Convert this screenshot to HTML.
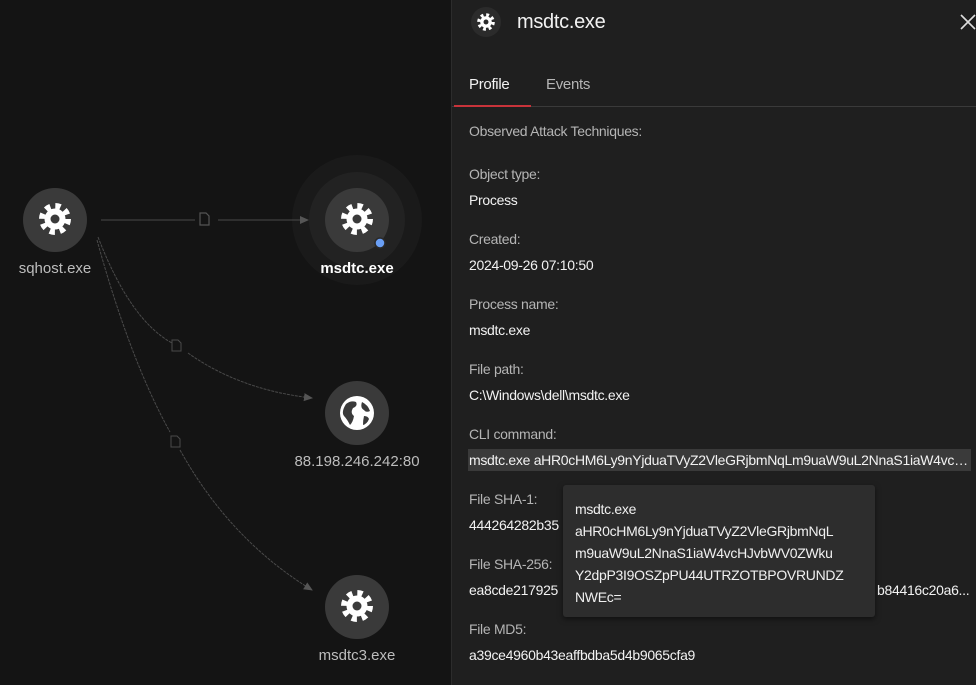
<!DOCTYPE html>
<html><head><meta charset="utf-8"><style>
*{margin:0;padding:0;box-sizing:border-box}
body{width:976px;height:685px;background:#141414;overflow:hidden;position:relative;font-family:"Liberation Sans",sans-serif}
#panel{position:absolute;left:451px;top:0;width:525px;height:685px;background:#1f1f1f;border-left:1px solid #2c2c2c}
.t{position:absolute;left:17px;font-size:14px;white-space:nowrap;letter-spacing:-0.3px}
.l{color:#b5b5b5}
.v{color:#f2f2f2}
#tip{position:absolute;left:563px;top:485px;width:312px;height:132px;background:#2d2d2d;border-radius:3px;box-shadow:0 2px 6px rgba(0,0,0,.5);color:#f0f0f0;font-size:14px;letter-spacing:-0.3px;padding:13px 0 0 12px;line-height:22px}
</style></head><body>
<svg width="451" height="685" style="position:absolute;left:0;top:0">
<defs>
<g id="gear"><circle r="13" fill="none" stroke="#fff" stroke-width="6" stroke-dasharray="5.2 5"/><circle r="10.5" fill="#fff"/><circle r="4.5" fill="#3a3a3a"/></g>
<marker id="ar" markerWidth="10" markerHeight="10" refX="8" refY="4" orient="auto" markerUnits="userSpaceOnUse"><path d="M0,0 L9,4 L0,8z" fill="#555"/></marker>
</defs>
<circle cx="357" cy="220" r="65" fill="#1a1a1a"/>
<circle cx="357" cy="220" r="48" fill="#222"/>
<line x1="101" y1="220" x2="195" y2="220" stroke="#4a4a4a"/>
<line x1="218" y1="220" x2="308" y2="220" stroke="#4a4a4a" marker-end="url(#ar)"/>
<path d="M200,213 h6 l3,3 v9 h-9z" fill="none" stroke="#555" stroke-width="1.2"/>
<path d="M98,237 Q130,320 172,343 M188,353 Q240,390 312,398" fill="none" stroke="#4a4a4a" stroke-dasharray="3 1" marker-end="url(#ar)"/>
<path d="M172,340 h6 l3,3 v8 h-9z" fill="none" stroke="#4a4a4a"/>
<path d="M97,240 Q130,360 170,432 M180,450 Q230,540 312,590" fill="none" stroke="#4a4a4a" stroke-dasharray="3 1" marker-end="url(#ar)"/>
<path d="M171,436 h6 l3,3 v8 h-9z" fill="none" stroke="#4a4a4a"/>
<circle cx="55" cy="220" r="32" fill="#3a3a3a"/>
<use href="#gear" x="55" y="219"/>
<circle cx="357" cy="220" r="32" fill="#3a3a3a"/>
<use href="#gear" x="357" y="219"/>
<circle cx="380" cy="243" r="5" fill="#6a9ff5" stroke="#2a2a2a" stroke-width="1.5"/>
<circle cx="357" cy="413" r="32" fill="#3a3a3a"/>
<circle cx="357" cy="413" r="17" fill="#fff"/>
<path d="M346,404 q5,-4 10,-2 q2,4 -3,6 q-3,5 1,8 q-1,6 -4,9 q-3,-6 -6,-9 q-3,-4 2,-12z M362,402 q6,3 8,9 q-4,2 -6,-1 q-4,-2 -2,-8z M364,416 q4,0 5,3 q-2,5 -6,6 q0,-5 1,-9z" fill="#3a3a3a"/>
<circle cx="357" cy="607" r="32" fill="#3a3a3a"/>
<use href="#gear" x="357" y="606"/>
<g font-family="Liberation Sans,sans-serif" font-size="15" text-anchor="middle">
<text x="55" y="273" fill="#bdbdbd">sqhost.exe</text>
<text x="357" y="273" fill="#fff" font-weight="bold">msdtc.exe</text>
<text x="357" y="466" fill="#bdbdbd">88.198.246.242:80</text>
<text x="357" y="660" fill="#bdbdbd">msdtc3.exe</text>
</g>
</svg>
<div id="panel">
<svg width="32" height="32" style="position:absolute;left:18px;top:6px"><circle cx="16" cy="16" r="15" fill="#2b2b2b"/><g transform="translate(16,16) scale(0.55)"><circle r="13" fill="none" stroke="#fff" stroke-width="6" stroke-dasharray="5.2 5"/><circle r="10.5" fill="#fff"/><circle r="4.5" fill="#2b2b2b"/></g></svg>
<div style="position:absolute;left:65px;top:11px;font-size:20px;color:#f2f2f2;letter-spacing:-0.3px">msdtc.exe</div>
<svg width="16" height="16" style="position:absolute;left:508px;top:14px"><path d="M1,1 L15,15 M15,1 L1,15" stroke="#ddd" stroke-width="1.6"/></svg>
<div class="t v" style="top:76px;font-size:15px">Profile</div>
<div class="t l" style="top:76px;left:94px;font-size:15px">Events</div>
<div style="position:absolute;left:0;top:106px;width:525px;height:1px;background:#3a3a3a"></div>
<div style="position:absolute;left:2px;top:105px;width:77px;height:2px;background:#c8333a"></div>
<div class="t l" style="top:123px">Observed Attack Techniques:</div>
<div class="t l" style="top:166px">Object type:</div>
<div class="t v" style="top:192px">Process</div>
<div class="t l" style="top:231px">Created:</div>
<div class="t v" style="top:257px">2024-09-26 07:10:50</div>
<div class="t l" style="top:296px">Process name:</div>
<div class="t v" style="top:322px">msdtc.exe</div>
<div class="t l" style="top:361px">File path:</div>
<div class="t v" style="top:387px">C:\Windows\dell\msdtc.exe</div>
<div class="t l" style="top:426px">CLI command:</div>
<div style="position:absolute;left:16px;top:449px;width:503px;height:22px;background:#3a3a3a"></div>
<div class="t v" style="top:452px;width:500px;overflow:hidden;text-overflow:ellipsis">msdtc.exe aHR0cHM6Ly9nYjduaTVyZ2VleGRjbmNqLm9uaW9uL2NnaS1iaW4vcHJvbWV0ZWku</div>
<div class="t l" style="top:491px">File SHA-1:</div>
<div class="t v" style="top:517px">444264282b35</div>
<div class="t l" style="top:556px">File SHA-256:</div>
<div class="t v" style="top:582px">ea8cde217925</div>
<div class="t v" style="top:582px;left:425px">b84416c20a6...</div>
<div class="t l" style="top:621px">File MD5:</div>
<div class="t v" style="top:647px">a39ce4960b43eaffbdba5d4b9065cfa9</div>
</div>
<div id="tip">msdtc.exe<br>aHR0cHM6Ly9nYjduaTVyZ2VleGRjbmNqL<br>m9uaW9uL2NnaS1iaW4vcHJvbWV0ZWku<br>Y2dpP3I9OSZpPU44UTRZOTBPOVRUNDZ<br>NWEc=</div>
</body></html>
